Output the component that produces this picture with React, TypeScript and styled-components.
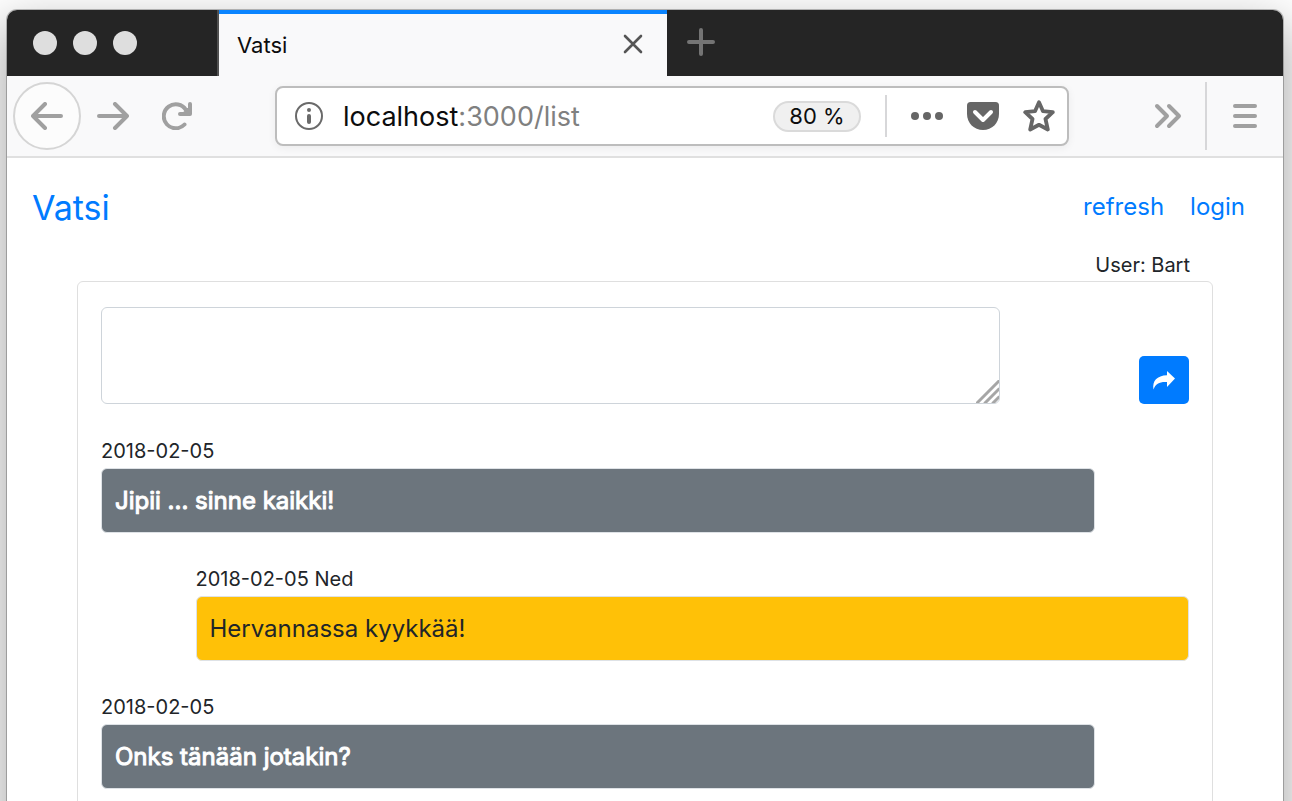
import React from "react";
import styled, { createGlobalStyle } from "styled-components";

const GlobalStyle = createGlobalStyle`
  *, *::before, *::after { box-sizing: border-box; }
  body {
    margin: 0;
    background: #fff;
    font-family: Inter, "Liberation Sans", sans-serif;
    color: #212529;
  }
  button, input, textarea { font: inherit; color: inherit; }
  button { padding: 0; border: 0; background: none; cursor: pointer; }
  svg { display: block; }
`;

const Desktop = styled.div`
  height: 100vh;
  padding: 10px 9px 0 7px;
  overflow: hidden;
`;

const BrowserWindow = styled.div`
  height: 120vh;
  border-radius: 10px 10px 0 0;
  background: #fff;
  box-shadow: 0 0 0 1px rgba(0, 0, 0, 0.24), 0 20px 50px 6px rgba(0, 0, 0, 0.32);
`;

const TitleBar = styled.div`
  display: flex;
  height: 66px;
  border-radius: 10px 10px 0 0;
  background: #252525;
  overflow: hidden;
`;

const WindowControls = styled.div`
  display: flex;
  align-items: center;
  gap: 16px;
  width: 212px;
  padding-left: 26px;
  border-right: 2px solid #515151;
`;

const WindowDot = styled.button`
  width: 24px;
  height: 24px;
  border-radius: 50%;
  background: #dedede;
`;

const Tab = styled.div`
  display: flex;
  align-items: center;
  justify-content: space-between;
  width: 448px;
  padding: 0 24px 2px 18px;
  border-top: 4px solid #0a84ff;
  background: #f9f9fa;
  font-size: 22px;
  line-height: 30px;
  color: #0c0c0d;
`;

const TabTitle = styled.span`
  padding-top: 2px;
`;

const NewTab = styled.button`
  padding: 0 20px 2px;
`;

const Toolbar = styled.div`
  display: flex;
  align-items: center;
  height: 82px;
  padding: 0 26px 0 6px;
  border-bottom: 2px solid #e0e0e0;
  background: #f9f9fa;
`;

const BackButton = styled.button`
  display: grid;
  place-items: center;
  width: 68px;
  height: 68px;
  border: 2px solid #d5d5d5;
  border-radius: 50%;
  background: #fcfcfc;
`;

const ToolButton = styled.button`
  display: grid;
  place-items: center;
  width: 64px;
  height: 64px;
`;

const AddressBar = styled.div`
  display: flex;
  align-items: center;
  flex: 1;
  height: 60px;
  margin: 0 67px 0 66px;
  padding: 0 12px 0 18px;
  border: 2px solid #bdbdbd;
  border-radius: 8px;
  background: #fff;
  box-shadow: 0 2px 8px rgba(0, 0, 0, 0.06);
`;

const Address = styled.div`
  flex: 1;
  margin-left: 20px;
  padding-top: 2px;
  font-size: 27px;
  line-height: 36px;
  color: #808080;
`;

const Host = styled.span`
  color: #0c0c0d;
`;

const Zoom = styled.button`
  width: 88px;
  height: 31px;
  border: 2px solid #dadada;
  border-radius: 16px;
  background: #f0f0f0;
  font-size: 22px;
  line-height: 27px;
  color: #0c0c0d;
`;

const Divider = styled.span<{ $height: number }>`
  width: 2px;
  height: ${(p) => p.$height}px;
  background: #d7d7d9;
`;

const MenuDivider = styled(Divider)`
  margin: 0 26px 0 5px;
`;

const PageActions = styled.div`
  display: flex;
  align-items: center;
  gap: 24px;
  margin-left: 24px;
`;

const Overflow = styled.div`
  display: flex;
  align-items: center;
`;

const Navbar = styled.nav`
  display: flex;
  align-items: center;
  justify-content: space-between;
  height: 92px;
  padding: 6px 38px 0 25px;
`;

const Brand = styled.a`
  padding-top: 2px;
  font-size: 34px;
  line-height: 48px;
  color: #007bff;
  text-decoration: none;
`;

const NavLinks = styled.div`
  display: flex;
  gap: 26px;
`;

const NavLink = styled.a`
  font-size: 24px;
  line-height: 36px;
  color: #007bff;
  text-decoration: none;
`;

const Content = styled.main`
  padding: 0 70px;
`;

const UserLine = styled.div`
  padding: 0 23px;
  font-size: 20px;
  line-height: 31px;
  text-align: right;
`;

const Card = styled.section`
  padding: 25px 0;
  border: 1px solid #dfdfdf;
  border-radius: 6px;
`;

const ComposeRow = styled.form`
  display: flex;
  align-items: flex-end;
  margin-bottom: 34px;
`;

const Column = styled.div<{ $span: number }>`
  flex: 0 0 calc(100% * ${(p) => p.$span} / 12);
  padding: 0 23px;
`;

const ActionColumn = styled(Column)`
  display: flex;
  justify-content: flex-end;
`;

const InputFrame = styled.div`
  position: relative;
`;

const MessageInput = styled.textarea`
  display: block;
  width: 100%;
  height: 97px;
  padding: 10px 20px;
  border: 1px solid #ced4da;
  border-radius: 6px;
  background: #fff;
  font-size: 24px;
  line-height: 38px;
  resize: none;
  outline: none;
`;

const ResizeGrip = styled.svg`
  position: absolute;
  right: 1px;
  bottom: 1px;
  pointer-events: none;
`;

const SendButton = styled.button`
  display: grid;
  place-items: center;
  width: 50px;
  height: 48px;
  border-radius: 5px;
  background: #007bff;
`;

const MessageList = styled.div`
  display: flex;
  flex-direction: column;
  gap: 33px;
`;

const MessageRow = styled.div<{ $own: boolean }>`
  display: flex;
  justify-content: ${(p) => (p.$own ? "flex-start" : "flex-end")};
`;

const MessageMeta = styled.div`
  padding-bottom: 4px;
  font-size: 20px;
  line-height: 26px;
`;

const Bubble = styled.div<{ $own: boolean }>`
  padding: 12px 13px;
  border: 1px solid #dee2e6;
  border-radius: 6px;
  background: ${(p) => (p.$own ? "#6c757d" : "#ffc107")};
  font-size: 24px;
  line-height: 39px;
  color: ${(p) => (p.$own ? "#fff" : "#212529")};
  -webkit-text-stroke: ${(p) => (p.$own ? "1px #fff" : "0")};
`;

const messages = [
  { meta: "2018-02-05", text: "Jipii ... sinne kaikki!", own: true },
  { meta: "2018-02-05 Ned", text: "Hervannassa kyykkää!", own: false },
  { meta: "2018-02-05", text: "Onks tänään jotakin?", own: true },
];

const stroke = (color: string, width: number) => ({
  fill: "none",
  stroke: color,
  strokeWidth: width,
  strokeLinecap: "round" as const,
  strokeLinejoin: "round" as const,
});

export default function App() {
  return (
    <>
      <GlobalStyle />
      <Desktop>
        <BrowserWindow>
          <TitleBar>
            <WindowControls>
              <WindowDot aria-label="Close window" />
              <WindowDot aria-label="Minimize window" />
              <WindowDot aria-label="Zoom window" />
            </WindowControls>
            <Tab>
              <TabTitle>Vatsi</TabTitle>
              <button aria-label="Close tab">
                <svg width="20" height="20" {...stroke("#555", 2.6)}>
                  <path d="M2 2 18 18M18 2 2 18" />
                </svg>
              </button>
            </Tab>
            <NewTab aria-label="New tab">
              <svg width="28" height="28" {...stroke("#747474", 4)}>
                <path d="M14 2V26M2 14H26" />
              </svg>
            </NewTab>
          </TitleBar>

          <Toolbar>
            <BackButton aria-label="Back">
              <svg width="32" height="28" {...stroke("#a0a0a0", 4)}>
                <path d="M30 14H2M14 2 2 14 14 26" />
              </svg>
            </BackButton>
            <ToolButton aria-label="Forward">
              <svg width="32" height="28" {...stroke("#a0a0a0", 4)}>
                <path d="M2 14H30M18 2 30 14 18 26" />
              </svg>
            </ToolButton>
            <ToolButton aria-label="Reload">
              <svg width="30" height="28" {...stroke("#a0a0a0", 4)}>
                <path d="M22.500 22.500A12 12 0 1 1 24 8" />
                <path d="M28 2V12H18" />
                <path d="M23 9 27 5V11H21Z" fill="#a0a0a0" strokeWidth="1" />
              </svg>
            </ToolButton>

            <AddressBar>
              <svg width="28" height="28" {...stroke("#6a6a6a", 2)}>
                <circle cx="14" cy="14" r="13" />
                <circle cx="14" cy="8" r="2" fill="#6a6a6a" stroke="none" />
                <path d="M14 14V20" strokeWidth="4" />
              </svg>
              <Address>
                <Host>localhost</Host>:3000/list
              </Address>
              <Zoom>80 %</Zoom>
              <PageActions>
                <Divider $height={42} />
                <button aria-label="Page actions">
                  <svg width="32" height="8" fill="#666">
                    <circle cx="4" cy="4" r="4" />
                    <circle cx="16" cy="4" r="4" />
                    <circle cx="28" cy="4" r="4" />
                  </svg>
                </button>
                <button aria-label="Save to Pocket">
                  <svg width="32" height="28">
                    <path
                      d="M3.5 0H28.5Q32 0 32 3.5V12C32 21 25 28 16 28S0 21 0 12V3.500Q0 0 3.500 0Z"
                      fill="#666"
                    />
                    <path d="M8 10 16 18 24 10" {...stroke("#fff", 4)} />
                  </svg>
                </button>
                <button aria-label="Bookmark this page">
                  <svg width="32" height="32" {...stroke("#666", 3.8)}>
                    <path d="M16 2.200 20 11.200 29.800 12.200 22.500 19 24.800 29.500 16 24.800 7.200 29.500 9.500 19 2.200 12.200 12 11.200Z" />
                  </svg>
                </button>
              </PageActions>
            </AddressBar>

            <Overflow>
              <ToolButton aria-label="More tools">
                <svg width="28" height="26" {...stroke("#a0a0a0", 4)}>
                  <path d="M3 3 13 13 3 23M15 3 25 13 15 23" />
                </svg>
              </ToolButton>
              <MenuDivider $height={68} />
              <button aria-label="Open menu">
                <svg width="24" height="24" {...stroke("#a0a0a0", 4)}>
                  <path d="M2 2H22M2 12H22M2 22H22" />
                </svg>
              </button>
            </Overflow>
          </Toolbar>

          <Navbar>
            <Brand href="#">Vatsi</Brand>
            <NavLinks>
              <NavLink href="#refresh">refresh</NavLink>
              <NavLink href="#login">login</NavLink>
            </NavLinks>
          </Navbar>

          <Content>
            <UserLine>User: Bart</UserLine>
            <Card>
              <ComposeRow onSubmit={(e) => e.preventDefault()}>
                <Column $span={10}>
                  <InputFrame>
                    <MessageInput aria-label="Message" />
                    <ResizeGrip width="23" height="23" {...stroke("#a6a6a6", 3)}>
                      <path d="M1 23 23 1M9 23 23 9M17 23 23 17" />
                    </ResizeGrip>
                  </InputFrame>
                </Column>
                <ActionColumn $span={2}>
                  <SendButton type="submit" aria-label="Send">
                    <svg width="24" height="22" fill="#fff">
                      <path d="M15 2 23 9.500 15 18V13C8 12.500 3.500 14.500 1.500 20.500C0 12 5 6.500 15 6.200Z" />
                    </svg>
                  </SendButton>
                </ActionColumn>
              </ComposeRow>

              <MessageList>
                {messages.map((m, i) => (
                  <MessageRow key={i} $own={m.own}>
                    <Column $span={11}>
                      <MessageMeta>{m.meta}</MessageMeta>
                      <Bubble $own={m.own}>{m.text}</Bubble>
                    </Column>
                  </MessageRow>
                ))}
              </MessageList>
            </Card>
          </Content>
        </BrowserWindow>
      </Desktop>
    </>
  );
}
